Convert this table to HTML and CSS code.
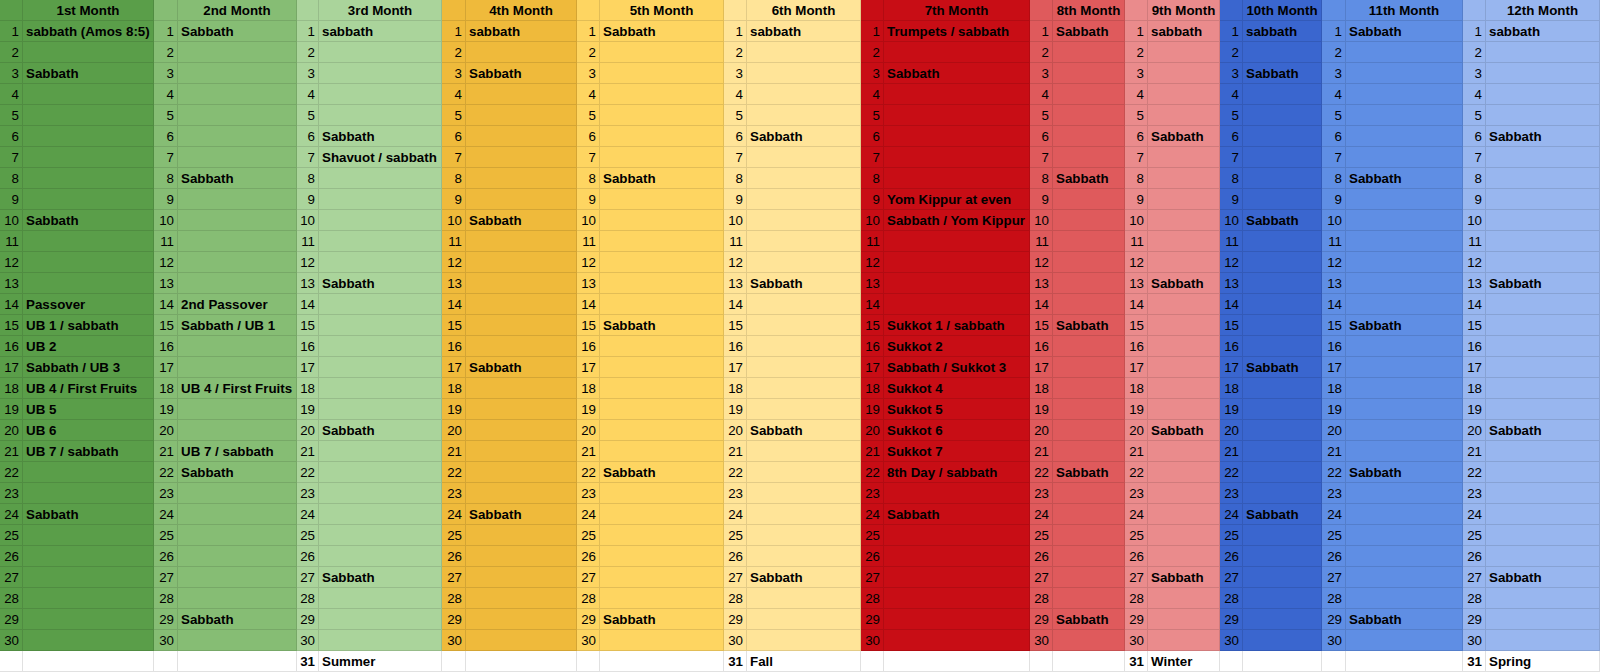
FILE: index.html
```html
<!DOCTYPE html>
<html lang="en">
<head>
<meta charset="utf-8">
<title>Calendar</title>
<link rel="stylesheet" href="styles.css">
</head>
<body>
<table class="sheet">
<colgroup>
<col class="m1 wn1"><col class="m1 wt1">
<col class="m2 wn2"><col class="m2 wt2">
<col class="m3 wn3"><col class="m3 wt3">
<col class="m4 wn4"><col class="m4 wt4">
<col class="m5 wn5"><col class="m5 wt5">
<col class="m6 wn6"><col class="m6 wt6">
<col class="m7 wn7"><col class="m7 wt7">
<col class="m8 wn8"><col class="m8 wt8">
<col class="m9 wn9"><col class="m9 wt9">
<col class="m10 wn10"><col class="m10 wt10">
<col class="m11 wn11"><col class="m11 wt11">
<col class="m12 wn12"><col class="m12 wt12">
</colgroup>
<tbody>
<tr class="head"><td></td><td>1st Month</td><td></td><td>2nd Month</td><td></td><td>3rd Month</td><td></td><td>4th Month</td><td></td><td>5th Month</td><td></td><td>6th Month</td><td></td><td>7th Month</td><td></td><td>8th Month</td><td></td><td>9th Month</td><td></td><td>10th Month</td><td></td><td>11th Month</td><td></td><td>12th Month</td></tr>
<tr><td>1</td><td>sabbath (Amos 8:5)</td><td>1</td><td>Sabbath</td><td>1</td><td>sabbath</td><td>1</td><td>sabbath</td><td>1</td><td>Sabbath</td><td>1</td><td>sabbath</td><td>1</td><td>Trumpets / sabbath</td><td>1</td><td>Sabbath</td><td>1</td><td>sabbath</td><td>1</td><td>sabbath</td><td>1</td><td>Sabbath</td><td>1</td><td>sabbath</td></tr>
<tr><td>2</td><td></td><td>2</td><td></td><td>2</td><td></td><td>2</td><td></td><td>2</td><td></td><td>2</td><td></td><td>2</td><td></td><td>2</td><td></td><td>2</td><td></td><td>2</td><td></td><td>2</td><td></td><td>2</td><td></td></tr>
<tr><td>3</td><td>Sabbath</td><td>3</td><td></td><td>3</td><td></td><td>3</td><td>Sabbath</td><td>3</td><td></td><td>3</td><td></td><td>3</td><td>Sabbath</td><td>3</td><td></td><td>3</td><td></td><td>3</td><td>Sabbath</td><td>3</td><td></td><td>3</td><td></td></tr>
<tr><td>4</td><td></td><td>4</td><td></td><td>4</td><td></td><td>4</td><td></td><td>4</td><td></td><td>4</td><td></td><td>4</td><td></td><td>4</td><td></td><td>4</td><td></td><td>4</td><td></td><td>4</td><td></td><td>4</td><td></td></tr>
<tr><td>5</td><td></td><td>5</td><td></td><td>5</td><td></td><td>5</td><td></td><td>5</td><td></td><td>5</td><td></td><td>5</td><td></td><td>5</td><td></td><td>5</td><td></td><td>5</td><td></td><td>5</td><td></td><td>5</td><td></td></tr>
<tr><td>6</td><td></td><td>6</td><td></td><td>6</td><td>Sabbath</td><td>6</td><td></td><td>6</td><td></td><td>6</td><td>Sabbath</td><td>6</td><td></td><td>6</td><td></td><td>6</td><td>Sabbath</td><td>6</td><td></td><td>6</td><td></td><td>6</td><td>Sabbath</td></tr>
<tr><td>7</td><td></td><td>7</td><td></td><td>7</td><td>Shavuot / sabbath</td><td>7</td><td></td><td>7</td><td></td><td>7</td><td></td><td>7</td><td></td><td>7</td><td></td><td>7</td><td></td><td>7</td><td></td><td>7</td><td></td><td>7</td><td></td></tr>
<tr><td>8</td><td></td><td>8</td><td>Sabbath</td><td>8</td><td></td><td>8</td><td></td><td>8</td><td>Sabbath</td><td>8</td><td></td><td>8</td><td></td><td>8</td><td>Sabbath</td><td>8</td><td></td><td>8</td><td></td><td>8</td><td>Sabbath</td><td>8</td><td></td></tr>
<tr><td>9</td><td></td><td>9</td><td></td><td>9</td><td></td><td>9</td><td></td><td>9</td><td></td><td>9</td><td></td><td>9</td><td>Yom Kippur at even</td><td>9</td><td></td><td>9</td><td></td><td>9</td><td></td><td>9</td><td></td><td>9</td><td></td></tr>
<tr><td>10</td><td>Sabbath</td><td>10</td><td></td><td>10</td><td></td><td>10</td><td>Sabbath</td><td>10</td><td></td><td>10</td><td></td><td>10</td><td>Sabbath / Yom Kippur</td><td>10</td><td></td><td>10</td><td></td><td>10</td><td>Sabbath</td><td>10</td><td></td><td>10</td><td></td></tr>
<tr><td>11</td><td></td><td>11</td><td></td><td>11</td><td></td><td>11</td><td></td><td>11</td><td></td><td>11</td><td></td><td>11</td><td></td><td>11</td><td></td><td>11</td><td></td><td>11</td><td></td><td>11</td><td></td><td>11</td><td></td></tr>
<tr><td>12</td><td></td><td>12</td><td></td><td>12</td><td></td><td>12</td><td></td><td>12</td><td></td><td>12</td><td></td><td>12</td><td></td><td>12</td><td></td><td>12</td><td></td><td>12</td><td></td><td>12</td><td></td><td>12</td><td></td></tr>
<tr><td>13</td><td></td><td>13</td><td></td><td>13</td><td>Sabbath</td><td>13</td><td></td><td>13</td><td></td><td>13</td><td>Sabbath</td><td>13</td><td></td><td>13</td><td></td><td>13</td><td>Sabbath</td><td>13</td><td></td><td>13</td><td></td><td>13</td><td>Sabbath</td></tr>
<tr><td>14</td><td>Passover</td><td>14</td><td>2nd Passover</td><td>14</td><td></td><td>14</td><td></td><td>14</td><td></td><td>14</td><td></td><td>14</td><td></td><td>14</td><td></td><td>14</td><td></td><td>14</td><td></td><td>14</td><td></td><td>14</td><td></td></tr>
<tr><td>15</td><td>UB 1 / sabbath</td><td>15</td><td>Sabbath / UB 1</td><td>15</td><td></td><td>15</td><td></td><td>15</td><td>Sabbath</td><td>15</td><td></td><td>15</td><td>Sukkot 1 / sabbath</td><td>15</td><td>Sabbath</td><td>15</td><td></td><td>15</td><td></td><td>15</td><td>Sabbath</td><td>15</td><td></td></tr>
<tr><td>16</td><td>UB 2</td><td>16</td><td></td><td>16</td><td></td><td>16</td><td></td><td>16</td><td></td><td>16</td><td></td><td>16</td><td>Sukkot 2</td><td>16</td><td></td><td>16</td><td></td><td>16</td><td></td><td>16</td><td></td><td>16</td><td></td></tr>
<tr><td>17</td><td>Sabbath / UB 3</td><td>17</td><td></td><td>17</td><td></td><td>17</td><td>Sabbath</td><td>17</td><td></td><td>17</td><td></td><td>17</td><td>Sabbath / Sukkot 3</td><td>17</td><td></td><td>17</td><td></td><td>17</td><td>Sabbath</td><td>17</td><td></td><td>17</td><td></td></tr>
<tr><td>18</td><td>UB 4 / First Fruits</td><td>18</td><td>UB 4 / First Fruits</td><td>18</td><td></td><td>18</td><td></td><td>18</td><td></td><td>18</td><td></td><td>18</td><td>Sukkot 4</td><td>18</td><td></td><td>18</td><td></td><td>18</td><td></td><td>18</td><td></td><td>18</td><td></td></tr>
<tr><td>19</td><td>UB 5</td><td>19</td><td></td><td>19</td><td></td><td>19</td><td></td><td>19</td><td></td><td>19</td><td></td><td>19</td><td>Sukkot 5</td><td>19</td><td></td><td>19</td><td></td><td>19</td><td></td><td>19</td><td></td><td>19</td><td></td></tr>
<tr><td>20</td><td>UB 6</td><td>20</td><td></td><td>20</td><td>Sabbath</td><td>20</td><td></td><td>20</td><td></td><td>20</td><td>Sabbath</td><td>20</td><td>Sukkot 6</td><td>20</td><td></td><td>20</td><td>Sabbath</td><td>20</td><td></td><td>20</td><td></td><td>20</td><td>Sabbath</td></tr>
<tr><td>21</td><td>UB 7 / sabbath</td><td>21</td><td>UB 7 / sabbath</td><td>21</td><td></td><td>21</td><td></td><td>21</td><td></td><td>21</td><td></td><td>21</td><td>Sukkot 7</td><td>21</td><td></td><td>21</td><td></td><td>21</td><td></td><td>21</td><td></td><td>21</td><td></td></tr>
<tr><td>22</td><td></td><td>22</td><td>Sabbath</td><td>22</td><td></td><td>22</td><td></td><td>22</td><td>Sabbath</td><td>22</td><td></td><td>22</td><td>8th Day / sabbath</td><td>22</td><td>Sabbath</td><td>22</td><td></td><td>22</td><td></td><td>22</td><td>Sabbath</td><td>22</td><td></td></tr>
<tr><td>23</td><td></td><td>23</td><td></td><td>23</td><td></td><td>23</td><td></td><td>23</td><td></td><td>23</td><td></td><td>23</td><td></td><td>23</td><td></td><td>23</td><td></td><td>23</td><td></td><td>23</td><td></td><td>23</td><td></td></tr>
<tr><td>24</td><td>Sabbath</td><td>24</td><td></td><td>24</td><td></td><td>24</td><td>Sabbath</td><td>24</td><td></td><td>24</td><td></td><td>24</td><td>Sabbath</td><td>24</td><td></td><td>24</td><td></td><td>24</td><td>Sabbath</td><td>24</td><td></td><td>24</td><td></td></tr>
<tr><td>25</td><td></td><td>25</td><td></td><td>25</td><td></td><td>25</td><td></td><td>25</td><td></td><td>25</td><td></td><td>25</td><td></td><td>25</td><td></td><td>25</td><td></td><td>25</td><td></td><td>25</td><td></td><td>25</td><td></td></tr>
<tr><td>26</td><td></td><td>26</td><td></td><td>26</td><td></td><td>26</td><td></td><td>26</td><td></td><td>26</td><td></td><td>26</td><td></td><td>26</td><td></td><td>26</td><td></td><td>26</td><td></td><td>26</td><td></td><td>26</td><td></td></tr>
<tr><td>27</td><td></td><td>27</td><td></td><td>27</td><td>Sabbath</td><td>27</td><td></td><td>27</td><td></td><td>27</td><td>Sabbath</td><td>27</td><td></td><td>27</td><td></td><td>27</td><td>Sabbath</td><td>27</td><td></td><td>27</td><td></td><td>27</td><td>Sabbath</td></tr>
<tr><td>28</td><td></td><td>28</td><td></td><td>28</td><td></td><td>28</td><td></td><td>28</td><td></td><td>28</td><td></td><td>28</td><td></td><td>28</td><td></td><td>28</td><td></td><td>28</td><td></td><td>28</td><td></td><td>28</td><td></td></tr>
<tr><td>29</td><td></td><td>29</td><td>Sabbath</td><td>29</td><td></td><td>29</td><td></td><td>29</td><td>Sabbath</td><td>29</td><td></td><td>29</td><td></td><td>29</td><td>Sabbath</td><td>29</td><td></td><td>29</td><td></td><td>29</td><td>Sabbath</td><td>29</td><td></td></tr>
<tr><td>30</td><td></td><td>30</td><td></td><td>30</td><td></td><td>30</td><td></td><td>30</td><td></td><td>30</td><td></td><td>30</td><td></td><td>30</td><td></td><td>30</td><td></td><td>30</td><td></td><td>30</td><td></td><td>30</td><td></td></tr>
<tr class="extra"><td></td><td></td><td></td><td></td><td>31</td><td>Summer</td><td></td><td></td><td></td><td></td><td>31</td><td>Fall</td><td></td><td></td><td></td><td></td><td>31</td><td>Winter</td><td></td><td></td><td></td><td></td><td>31</td><td>Spring</td></tr>
</tbody>
</table>
</body>
</html>
```
FILE: styles.css
```css
html, body {
  margin: 0;
  padding: 0;
  background: #ffffff;
}

.sheet {
  table-layout: fixed;
  width: 1600px;
  border-collapse: separate;
  border-spacing: 0;
  font-family: "Liberation Sans", Arial, sans-serif;
  font-size: 13.33px;
  color: #000000;
}

.sheet tr {
  height: 21px;
}

.sheet td {
  box-sizing: border-box;
  height: 21px;
  padding: 1px 3px 0 3px;
  line-height: 19px;
  border-right: 1px solid rgba(0, 0, 0, 0.11);
  border-bottom: 1px solid rgba(0, 0, 0, 0.11);
  white-space: nowrap;
  overflow: hidden;
  vertical-align: top;
}

.sheet td:nth-child(odd) {
  text-align: right;
}

.sheet td:nth-child(even) {
  text-align: left;
  font-weight: bold;
}

.sheet .head td {
  text-align: center;
}

.sheet .extra td {
  background: #ffffff;
  font-weight: bold;
  border-color: #e1e1e1;
}

/* column widths (include the 1px gridline) */
.wn1 { width: 23px; }  .wt1 { width: 131px; }
.wn2 { width: 24px; }  .wt2 { width: 119px; }
.wn3 { width: 22px; }  .wt3 { width: 123px; }
.wn4 { width: 24px; }  .wt4 { width: 111px; }
.wn5 { width: 23px; }  .wt5 { width: 124px; }
.wn6 { width: 23px; }  .wt6 { width: 114px; }
.wn7 { width: 23px; }  .wt7 { width: 146px; }
.wn8 { width: 23px; }  .wt8 { width: 72px; }
.wn9 { width: 23px; }  .wt9 { width: 72px; }
.wn10 { width: 23px; } .wt10 { width: 79px; }
.wn11 { width: 24px; } .wt11 { width: 117px; }
.wn12 { width: 23px; } .wt12 { width: 114px; }

/* month fills */
.m1 { background: #5a9e49; }
.m2 { background: #86bd74; }
.m3 { background: #aad49b; }
.m4 { background: #efba3b; }
.m5 { background: #fed561; }
.m6 { background: #ffe498; }
.m7 { background: #c80d15; }
.m8 { background: #df5a5c; }
.m9 { background: #ea8b8c; }
.m10 { background: #3a66cf; }
.m11 { background: #5f8ee4; }
.m12 { background: #98b6ef; }
```
